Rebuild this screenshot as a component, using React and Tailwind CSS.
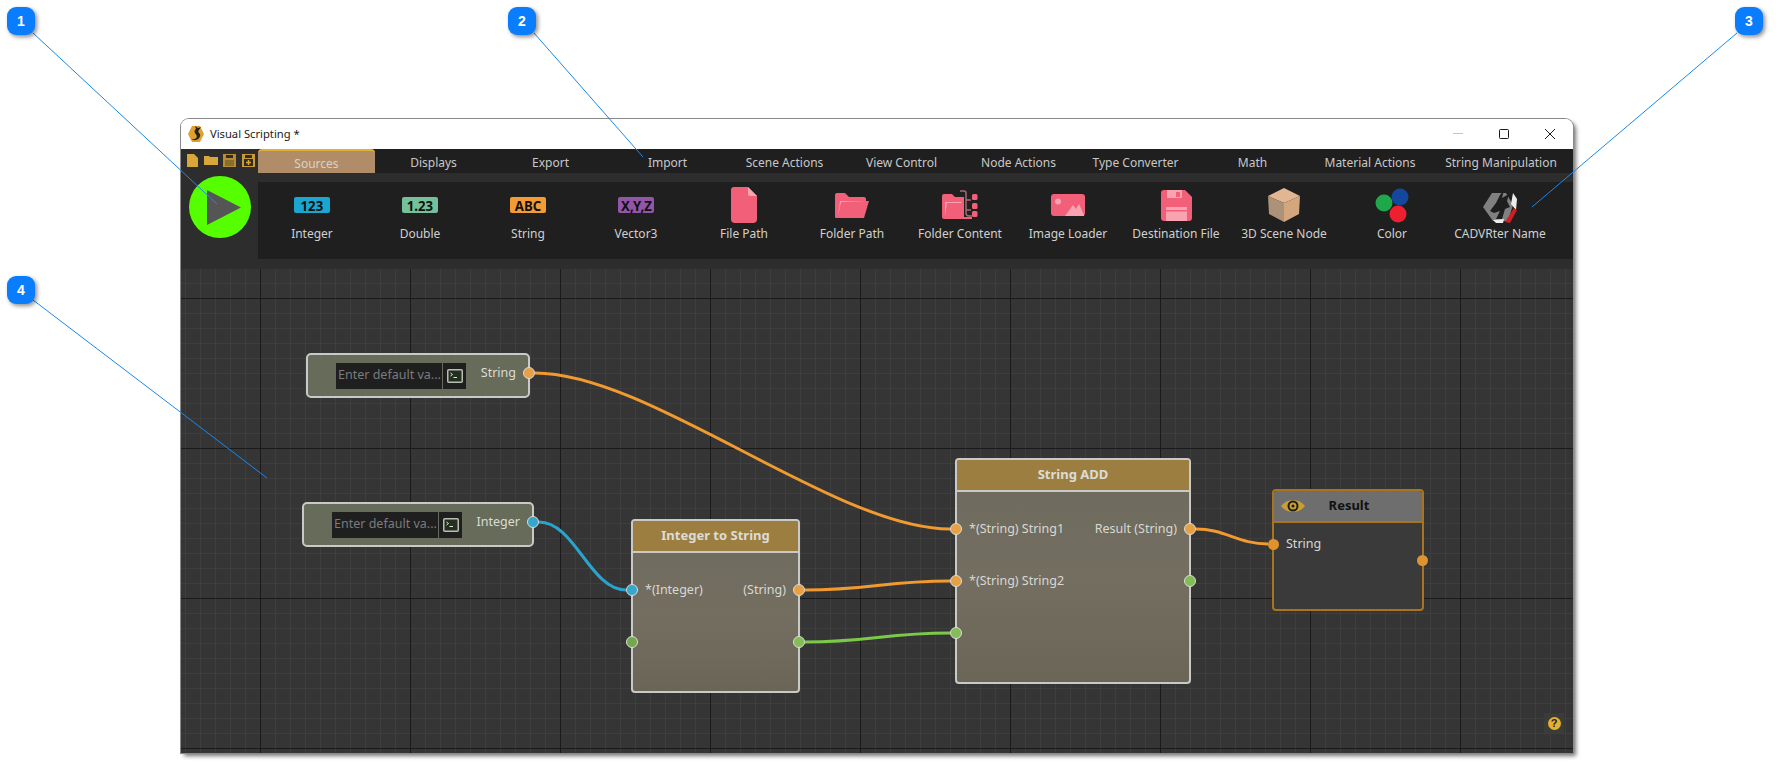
const tabs = [
  { label: "Sources", w: "w-[117px]" },
  { label: "Displays", w: "w-[117px]" },
  { label: "Export", w: "w-[117px]" },
  { label: "Import", w: "w-[117px]" },
  { label: "Scene Actions", w: "w-[117px]" },
  { label: "View Control", w: "w-[117px]" },
  { label: "Node Actions", w: "w-[117px]" },
  { label: "Type Converter", w: "w-[117px]" },
  { label: "Math", w: "w-[117px]" },
  { label: "Material Actions", w: "w-[118px]" },
  { label: "String Manipulation", w: "w-[144px]" },
];

function TypeBadge({ text, color }) {
  return (
    <div className={`flex h-4 w-9 items-center justify-center rounded-[2px] text-[15px] font-bold leading-none text-[#111] ${color}`}>
      <span className="inline-block scale-x-[0.88] whitespace-nowrap">{text}</span>
    </div>
  );
}

function FileIcon() {
  return (
    <svg width="26" height="36" viewBox="0 0 26 36">
      <path d="M3 0H17L26 9V32a4 4 0 0 1-4 4H4a4 4 0 0 1-4-4V3a3 3 0 0 1 3-3z" fill="#f25f79" />
      <path d="M17 0L26 9H19a2 2 0 0 1-2-2z" fill="#f9a3b0" />
    </svg>
  );
}

function FolderIcon() {
  return (
    <svg width="34" height="25" viewBox="0 0 34 25">
      <path d="M0 2a2 2 0 0 1 2-2H10L14 4H29a2 2 0 0 1 2 2V8H6L3 25H1a1 1 0 0 1-1-1z" fill="#f25f79" />
      <path d="M5 8H34L29 25H1z" fill="#f25f79" />
      <path d="M5 8H31L6 9L3 23z" fill="#f9a3b0" />
    </svg>
  );
}

function FolderContentIcon() {
  return (
    <svg width="36" height="30" viewBox="0 0 36 30">
      <path d="M0 6a2 2 0 0 1 2-2H10L13 7H22V27H30V29H2a2 2 0 0 1-2-2z" fill="#f25f79" />
      <path d="M3 12H20L19 13H5L3 26z" fill="#f9a3b0" />
      <path d="M18 1H22a2 2 0 0 1 2 2V23a3 3 0 0 0 3 3H30M24 10H29M24 20H29" fill="none" stroke="#a86a72" strokeWidth="1.5" />
      <rect x="30" y="4" width="5.5" height="6" rx="1.5" fill="#f25f79" />
      <rect x="30" y="13" width="5.5" height="6" rx="1.5" fill="#f25f79" />
      <rect x="30" y="21" width="5.5" height="6" rx="1.5" fill="#f25f79" />
    </svg>
  );
}

function ImageIcon() {
  return (
    <svg width="34" height="22" viewBox="0 0 34 22">
      <rect width="34" height="22" rx="3" fill="#f25f79" />
      <circle cx="7" cy="7.5" r="3" fill="#f9a3b0" />
      <path d="M14 22L22 11L25 15L28 10L33 21V22z" fill="#f9a3b0" />
    </svg>
  );
}

function SaveIcon() {
  return (
    <svg width="31" height="31" viewBox="0 0 31 31">
      <path d="M3 0H24L31 7V28a3 3 0 0 1-3 3H3a3 3 0 0 1-3-3V3a3 3 0 0 1 3-3z" fill="#f25f79" />
      <rect x="6" y="0" width="15" height="8" fill="#f9a3b0" />
      <rect x="15" y="2" width="4" height="5" fill="#f25f79" />
      <rect x="5" y="17" width="21" height="14" fill="#f9a3b0" />
      <rect x="5" y="20" width="21" height="1.5" fill="#f25f79" />
    </svg>
  );
}

function CubeIcon() {
  return (
    <svg width="32" height="34" viewBox="0 0 32 34">
      <path d="M16 0L32 8L16 15L0 8z" fill="#e2b692" />
      <path d="M0 8L16 15V34L1 26z" fill="#ac9279" />
      <path d="M32 8L16 15V34L31 26z" fill="#d3a67e" />
    </svg>
  );
}

function ColorIcon() {
  return (
    <svg width="36" height="36" viewBox="0 0 36 36">
      <circle cx="10" cy="16" r="8.5" fill="#1fa84a" />
      <circle cx="26" cy="10" r="8.5" fill="#14479e" />
      <circle cx="24" cy="27" r="8.5" fill="#ee2030" />
    </svg>
  );
}

function CadvrIcon() {
  return (
    <svg width="36" height="37" viewBox="0 0 36 37">
      <path d="M10 6H24L31 18L26 34H11L1 20z" fill="#808080" />
      <path d="M8 24L14 16L18 8L22 3L20 11L27 7L25 14L28 20L23 22L20 32L14 32L18 24L12 26z" fill="#1e1e1e" />
      <path d="M31 6L35 12L34 23L29 17z" fill="#ececec" />
      <path d="M23 35L32 21L35 23L28 36z" fill="#d01e22" />
      <path d="M11 33L22 32L21 36H14z" fill="#ececec" />
    </svg>
  );
}

const tools = [
  { label: "Integer", icon: <TypeBadge text="123" color="bg-[#1ba6cf]" /> },
  { label: "Double", icon: <TypeBadge text="1.23" color="bg-[#74c09a]" /> },
  { label: "String", icon: <TypeBadge text="ABC" color="bg-[#f39c35]" /> },
  { label: "Vector3", icon: <TypeBadge text="X,Y,Z" color="bg-[#9256a8]" /> },
  { label: "File Path", icon: <FileIcon /> },
  { label: "Folder Path", icon: <FolderIcon /> },
  { label: "Folder Content", icon: <FolderContentIcon /> },
  { label: "Image Loader", icon: <ImageIcon /> },
  { label: "Destination File", icon: <SaveIcon /> },
  { label: "3D Scene Node", icon: <CubeIcon /> },
  { label: "Color", icon: <ColorIcon /> },
  { label: "CADVRter Name", icon: <CadvrIcon /> },
];

function Port({ className }) {
  return <span className={`absolute h-3 w-3 rounded-full border-[1.5px] border-[#dcdcd8] ${className}`} />;
}

function TerminalButton() {
  return (
    <div className="ml-px flex h-[26px] w-[23px] shrink-0 items-center justify-center bg-[#1f1f1f]">
      <svg width="16" height="14" viewBox="0 0 16 14">
        <rect x="0.75" y="0.75" width="14.5" height="12.5" rx="1" fill="#23301f" stroke="#b9bdb4" strokeWidth="1.5" />
        <path d="M3.5 4L5.5 5.5L3.5 7M6.5 8.5H10" fill="none" stroke="#e6e6e0" strokeWidth="1" />
      </svg>
    </div>
  );
}

function ValueNode({ label, position, portColor }) {
  return (
    <div className={`absolute flex h-[45px] items-center rounded-[5px] border-2 border-[#c9c9c6] bg-[#6a6f5c]/95 pl-[28px] pr-[12px] ${position}`}>
      <div className="flex h-[26px] w-[106px] shrink-0 items-center whitespace-nowrap bg-[#1f1f1f] px-[2px] text-[12.5px] text-[#7b7b7b]">Enter default va...</div>
      <TerminalButton />
      <span className="mb-[5px] ml-auto text-[12.5px] leading-5 text-[#dcdcd6]">{label}</span>
      <Port className={`right-[-7px] top-[12px] ${portColor}`} />
    </div>
  );
}

function ProcessNode({ title, position, children }) {
  return (
    <div className={`absolute rounded-[4px] border-2 border-[#c9c9c6] bg-[linear-gradient(#6d6a5d,#736e60_55%,#6b6558)] ${position}`}>
      <div className="flex h-8 items-center justify-center rounded-t-[2px] border-b-2 border-[#c9c9c6] bg-[#9c7f40] text-[13px] font-bold text-[#dcdcd6]">{title}</div>
      {children}
    </div>
  );
}

function Badge({ n, position }) {
  return (
    <div className={`absolute flex h-7 w-7 items-center justify-center rounded-[9px] bg-[#0a7dfc] font-['Liberation_Sans'] text-sm font-bold text-white shadow-[2px_2px_4px_rgba(0,0,0,0.45)] ${position}`}>{n}</div>
  );
}

export default function App() {
  return (
    <div className="relative h-[763px] w-full overflow-hidden bg-white pl-[181px] pt-[119px] font-['Noto_Sans',sans-serif]">
      <div className="flex h-[634px] w-[1392px] flex-col overflow-hidden rounded-t-lg shadow-[0_0_0_1px_#8a8a8a,3px_3px_4px_rgba(0,0,0,0.55)]">
        {/* title bar */}
        <div className="flex h-[30px] items-center bg-white pl-[7px]">
          <svg width="16" height="18" viewBox="0 0 16 18">
            <path d="M4 1H12L16 9L12 17H4L0 9z" fill="#e0a030" />
            <path d="M3 14C8 15 10 12 8 9.500C6 7.500 6 5 8 4L7 1L10 3L13 2L11 5C10 6 10 7 12 9C13 12 10 16 5 15z" fill="#26211a" />
          </svg>
          <span className="ml-[6px] text-[11.2px] text-[#1a1a1a]">Visual Scripting *</span>
          <div className="ml-auto flex items-center">
            <svg width="46" height="30" viewBox="0 0 46 30"><path d="M18 14.500H28" stroke="#c4c4c4" /></svg>
            <svg width="46" height="30" viewBox="0 0 46 30"><rect x="18.500" y="10.500" width="9" height="9" rx="1" fill="none" stroke="#1a1a1a" /></svg>
            <svg width="46" height="30" viewBox="0 0 46 30"><path d="M18 10L28 20M28 10L18 20" stroke="#1a1a1a" /></svg>
          </div>
        </div>

        {/* tabs and toolbar */}
        <div className="flex h-[120px] bg-[#2d2d2d]">
          <div className="w-[77px]">
            <div className="flex h-[22px] items-center gap-[5.5px] pl-[6px]">
              <svg width="11" height="13" viewBox="0 0 11 13"><path d="M0 0H7L11 4V13H0z" fill="#d9a63a" /></svg>
              <svg width="14" height="10" viewBox="0 0 14 10"><path d="M0 1H5L6 2H14V10H0z" fill="#d9a63a" /></svg>
              <svg width="13" height="13" viewBox="0 0 13 13"><path d="M0 0H13V13H0z" fill="#b88c35" /><rect x="3" y="1" width="7" height="3" fill="#2d2d2d" /><rect x="2" y="6" width="9" height="6" fill="#8a6c2e" /></svg>
              <svg width="13" height="13" viewBox="0 0 13 13"><path d="M0 0H13V13H0z" fill="#c99a38" /><rect x="3" y="1" width="7" height="3" fill="#2d2d2d" /><rect x="2" y="5" width="9" height="7" fill="#2d2d2d" /><path d="M6.500 6V11M4 8.500H9" stroke="#d9a63a" strokeWidth="1.500" /></svg>
            </div>
            <div className="ml-[8px] mt-[5px] flex h-[62px] w-[62px] items-center justify-center rounded-full bg-[#55ff00]">
              <svg width="34" height="35" viewBox="0 0 34 35" className="ml-2"><path d="M0 0L34 17.500L0 35z" fill="#555555" /></svg>
            </div>
          </div>
          <div className="flex-1">
            <div className="flex h-6 bg-[#1f1f1f]">
              {tabs.map((tab, i) => (
                <div
                  key={tab.label}
                  className={`flex items-center justify-center pt-[3px] text-xs ${tab.w} ${i === 0 ? "rounded-t-[4px] border-t-2 border-[#e0b035] bg-[#b08c68] text-[#d8d2c8]" : "text-[#c8c8c8]"}`}
                >
                  {tab.label}
                </div>
              ))}
            </div>
            <div className="mt-[9px] flex h-[77px] bg-[#1f1f1f]">
              {tools.map((tool) => (
                <div key={tool.label} className="flex w-[108px] flex-col items-center pt-1">
                  <div className="flex h-[38px] items-center justify-center">{tool.icon}</div>
                  <span className="whitespace-nowrap text-xs leading-5 text-[#d0d0d0]">{tool.label}</span>
                </div>
              ))}
            </div>
          </div>
        </div>

        {/* node canvas */}
        <div className="relative flex-1 bg-[#353535] bg-[linear-gradient(#1a1a1a_1px,transparent_1px),linear-gradient(90deg,#1a1a1a_1px,transparent_1px),linear-gradient(#3e3e3e_1px,transparent_1px),linear-gradient(90deg,#3e3e3e_1px,transparent_1px)] bg-[size:150px_150px,150px_150px,15px_15px,15px_15px] bg-[position:79px_29px,79px_29px,4px_14px,4px_14px]">
          <ValueNode label="String" position="left-[125px] top-[84px] w-[224px]" portColor="bg-[#e8a045]" />
          <ValueNode label="Integer" position="left-[121px] top-[233px] w-[232px]" portColor="bg-[#35a6cc]" />

          <ProcessNode title="Integer to String" position="left-[450px] top-[250px] h-[174px] w-[169px]">
            <div className="flex justify-between px-3 pt-[27px] text-[12.5px] leading-5 text-[#d8d8d4]">
              <span>*(Integer)</span>
              <span>(String)</span>
            </div>
            <Port className="left-[-7px] top-[63px] bg-[#35a6cc]" />
            <Port className="right-[-7px] top-[63px] bg-[#e8a045]" />
            <Port className="left-[-7px] top-[115px] bg-[#74a84e]" />
            <Port className="right-[-7px] top-[115px] bg-[#82bd55]" />
          </ProcessNode>

          <ProcessNode title="String ADD" position="left-[774px] top-[189px] h-[226px] w-[236px]">
            <div className="flex justify-between px-3 pt-[27px] text-[12.5px] leading-5 text-[#d8d8d4]">
              <span>*(String) String1</span>
              <span>Result (String)</span>
            </div>
            <div className="px-3 pt-8 text-[12.5px] leading-5 text-[#d8d8d4]">*(String) String2</div>
            <Port className="left-[-7px] top-[63px] bg-[#e8a045]" />
            <Port className="right-[-7px] top-[63px] bg-[#e8a045]" />
            <Port className="left-[-7px] top-[115px] bg-[#e8a045]" />
            <Port className="right-[-7px] top-[115px] bg-[#82bd55]" />
            <Port className="left-[-7px] top-[167px] bg-[#82bd55]" />
          </ProcessNode>

          <div className="absolute left-[1091px] top-[220px] h-[122px] w-[152px] rounded-[4px] border-2 border-[#a8741f] bg-[#3a3a3a]">
            <div className="relative flex h-8 items-center justify-center rounded-t-[2px] border-b-2 border-[#a8741f] bg-[#6e6e6e] text-[13px] font-bold text-[#111]">
              <svg width="24" height="14" viewBox="0 0 24 14" className="absolute left-[7px] top-2">
                <path d="M0 7C6 -1 18 -1 24 7C18 15 6 15 0 7z" fill="#c9a030" />
                <circle cx="12" cy="7" r="4.500" fill="none" stroke="#1c1c1c" strokeWidth="2" />
                <circle cx="12" cy="7" r="1.500" fill="#1c1c1c" />
              </svg>
              <span className="pl-[2px]">Result</span>
            </div>
            <div className="px-3 pt-[11px] text-[12.5px] leading-5 text-[#d8d8d4]">String</div>
            <span className="absolute left-[-6px] top-[48px] h-[11px] w-[11px] rounded-full bg-[#dd9430]" />
            <span className="absolute right-[-6px] top-[64px] h-[11px] w-[11px] rounded-full bg-[#dd9430]" />
          </div>

          {/* wires, in page coordinates */}
          <svg className="absolute inset-0 h-full w-full" viewBox="181 269 1392 484" fill="none" strokeWidth="3">
            <path d="M535 373C650 373 835 529 950 529" stroke="#f09a30" />
            <path d="M539 522C575 522 590 590 626 590" stroke="#2aa4cc" />
            <path d="M805 590C870 590 885 581 950 581" stroke="#f09a30" />
            <path d="M805 642C870 642 885 633 950 633" stroke="#7cc94a" />
            <path d="M1196 529C1225 529 1238 544 1268 544" stroke="#f09a30" />
          </svg>

          <div className="absolute left-[1363px] top-[444px] flex h-5 w-5 items-center justify-center bg-[#3b3b38]">
            <span className="flex h-[13px] w-[13px] items-center justify-center rounded-full bg-[#e8b030] font-['Liberation_Sans'] text-[11px] font-bold text-[#222]">?</span>
          </div>
        </div>
      </div>

      {/* callouts */}
      <svg className="absolute inset-0 h-full w-full" viewBox="0 0 1776 763" fill="none" stroke="#1a88ee" strokeWidth="1">
        <path d="M33 33L217 204" />
        <path d="M534 33L643 157" />
        <path d="M1737 33L1532 207" />
        <path d="M33 300L267 478" />
      </svg>
      <Badge n="1" position="left-[7px] top-[7px]" />
      <Badge n="2" position="left-[508px] top-[7px]" />
      <Badge n="3" position="left-[1735px] top-[7px]" />
      <Badge n="4" position="left-[7px] top-[276px]" />
    </div>
  );
}
